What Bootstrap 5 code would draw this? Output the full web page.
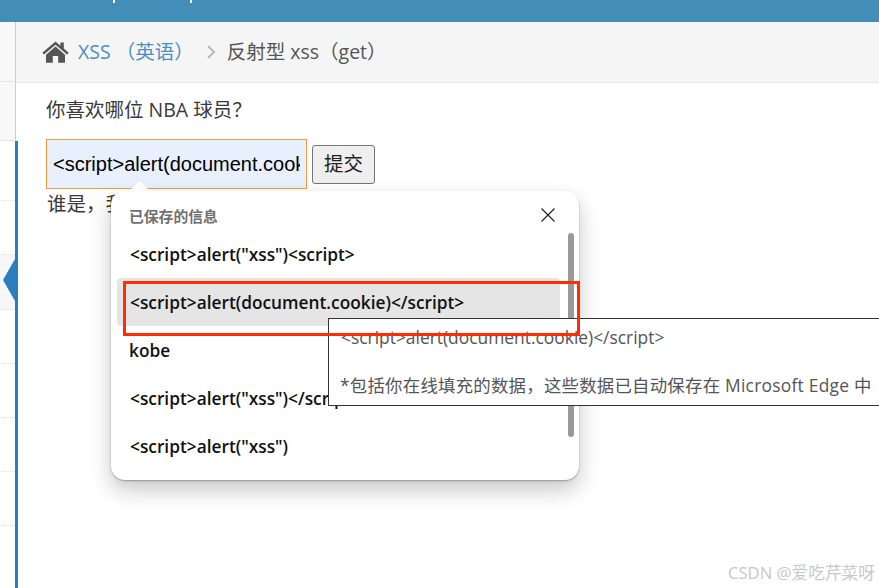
<!DOCTYPE html>
<html lang="zh-CN">
<head>
<meta charset="utf-8">
<title>XSS</title>
<link href="https://cdn.jsdelivr.net/npm/bootstrap@5.3.0/dist/css/bootstrap.min.css" rel="stylesheet">
<style>
html,body{height:588px;overflow:hidden;background:#fff}
body{font-family:"Open Sans","Noto Sans CJK SC",sans-serif;color:#393939;position:relative}
.topbar{height:22px;background:#438eb9;padding-left:113px;gap:75px}
.desc{width:2px;height:3px;background:#fff}
.shell{height:566px}
.rail{width:16px;flex:none;background:#fff;position:relative}
.rail-top{background:#f8f8f8;border-bottom:1px solid #e5e5e5;border-right:1px solid #ccc;width:16px;height:60px}
.rail-mid{background:#f8f8f8;border-bottom:1px solid #e5e5e5;border-right:1px solid #ccc;width:16px;height:59px}
.rail-blue{border-right:3px solid #2b7dbc;width:18px;flex:1;display:flex;flex-direction:column}
.rc{height:54px;border-bottom:1px dotted #e0e0e0;width:15px;flex:none}
.rc-first{height:60px}
.rc-active{background:#f5f7fb;position:relative;height:55px}
.rc-active::after{content:"";position:absolute;right:0;top:4px;border-style:solid;border-width:21px 12px 21px 0;border-color:transparent #2b7dbc transparent transparent}
.crumb{height:61px;background:#f5f5f5;border-bottom:1px solid #e5e5e5;padding-left:26px;font-size:19.5px;color:#555;line-height:1}
.crumb a{color:#4c8fbd;text-decoration:none;margin-left:1px}
.crumb-sep{width:10px;height:14px;color:#b2b6bf;margin:0 11px 0 12px}
.content{padding:14px 0 0 30px;font-size:19.5px;line-height:26px;color:#393939}
.q{margin:0 0 16px}
.xss-input{width:261px;height:50px;background:#e8f0fe;border:1px solid #f29a3f;font-family:"Liberation Sans",Arial,sans-serif;font-size:20px;color:#000;padding:0 6px;outline:0}
.xss-btn{width:63px;height:39px;background:#efefef;border:1px solid #767676;border-radius:3px;font-size:19.5px;color:#222;padding:0;line-height:1;margin-left:5px}
.who{margin:2px 0 0 1px}
.pop{position:absolute;left:111px;top:191px;width:468px;height:289px;background:#fff;border-radius:14px;box-shadow:0 1px 2px rgba(0,0,0,.3),0 10px 22px rgba(0,0,0,.22)}
.pop::before{content:"";position:absolute;left:21px;top:-7px;width:15px;height:15px;background:#fff;transform:rotate(45deg);border-radius:2px}
.pop-title{position:absolute;left:18px;top:16px;font-size:14.8px;line-height:18px;font-weight:600;color:#707070}
.pop-x{position:absolute;left:430px;top:17px;width:14px;height:14px}
.pop-list{position:absolute;left:6px;top:39px;width:443px}
.pop-row{height:48px;padding-left:13px;font-size:17.3px;font-weight:600;color:#111;line-height:50px;white-space:nowrap;border-radius:4px;overflow:hidden}
.pop-row.kobe{padding-left:12px}
.pop-row.hov{background:#e5e5e5}
.pop-thumb{position:absolute;left:457px;top:42px;width:6px;height:204px;background:#999;border-radius:3px}
.tip{position:absolute;left:328px;top:318px;width:560px;height:88px;background:#fff;border:1px solid #333;font-size:17.4px;line-height:24px;color:#555;padding:6px 12px;white-space:nowrap}
.tip p{margin:0 0 24px}
.tip p.tip-note{letter-spacing:.25px;margin-left:-1px}
.redbox{position:absolute;left:123px;top:281px;width:457px;height:55px;border:3px solid #ff2d00}
.mark-csdn{position:absolute;right:4px;bottom:5px;font-size:16.7px;color:#c8c8c8;line-height:20px;white-space:nowrap}
</style>
</head>
<body>
<div class="topbar d-flex"><span class="desc"></span><span class="desc"></span></div>
<div class="shell d-flex">
  <div class="rail d-flex flex-column">
    <div class="rail-top"></div>
    <div class="rail-mid"></div>
    <div class="rail-blue">
      <div class="rc rc-first"></div>
      <div class="rc"></div>
      <div class="rc rc-active"></div>
      <div class="rc"></div><div class="rc"></div><div class="rc"></div><div class="rc"></div>
    </div>
  </div>
  <div class="flex-grow-1">
    <div class="crumb d-flex align-items-center">
      <svg width="27" height="22" viewBox="0 0 27 22" class="me-2" aria-hidden="true"><path fill="#555" d="M13.5 0.5 L0.3 11.8 L2 13.6 L13.5 3.8 L25 13.6 L26.7 11.8 L21.8 7.6 V1.5 H18.4 V4.7 Z M13.5 5.6 L4 13.7 V21.7 H10.8 V15 H16.2 V21.7 H23 V13.7 Z"/></svg>
      <a href="#">XSS （英语）</a>
      <svg class="crumb-sep" viewBox="0 0 10 14" aria-hidden="true"><path d="M2 1 L8 7 L2 13" fill="none" stroke="currentColor" stroke-width="1.8"/></svg>
      <span>反射型 xss（get）</span>
    </div>
    <div class="content">
      <p class="q">你喜欢哪位 NBA 球员？</p>
      <form class="d-flex align-items-center m-0" onsubmit="return false">
        <input class="xss-input" type="text" value="&lt;script&gt;alert(document.cookie)&lt;/script&gt;">
        <button class="xss-btn" type="button">提交</button>
      </form>
      <p class="who">谁是，我</p>
    </div>
  </div>
</div>

<div class="pop">
  <div class="pop-title">已保存的信息</div>
  <svg class="pop-x" viewBox="0 0 14 14" aria-hidden="true"><path d="M0.5 0.5 L13.5 13.5 M13.5 0.5 L0.5 13.5" stroke="#222" stroke-width="1.2" fill="none"/></svg>
  <div class="pop-list">
    <div class="pop-row">&lt;script&gt;alert("xss")&lt;script&gt;</div>
    <div class="pop-row hov">&lt;script&gt;alert(document.cookie)&lt;/script&gt;</div>
    <div class="pop-row kobe">kobe</div>
    <div class="pop-row">&lt;script&gt;alert("xss")&lt;/script&gt;</div>
    <div class="pop-row">&lt;script&gt;alert("xss")</div>
  </div>
  <div class="pop-thumb"></div>
</div>
<div class="tip">
  <p>&lt;script&gt;alert(document.cookie)&lt;/script&gt;</p>
  <p class="tip-note">*包括你在线填充的数据，这些数据已自动保存在 Microsoft Edge 中</p>
</div>
<div class="redbox"></div>
<div class="mark-csdn">CSDN @爱吃芹菜呀</div>
<script src="https://cdn.jsdelivr.net/npm/bootstrap@5.3.0/dist/js/bootstrap.bundle.min.js"></script>
</body>
</html>
